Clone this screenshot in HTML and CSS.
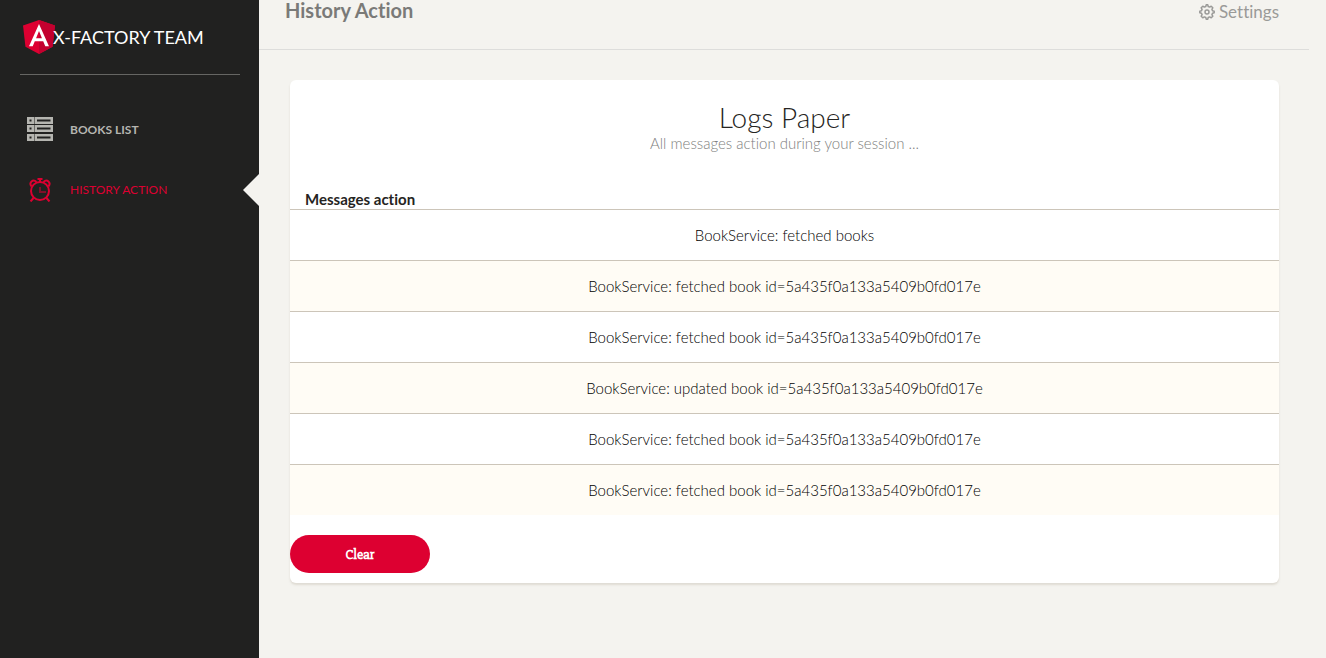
FILE: index.html
```html
<!DOCTYPE html>
<html lang="en">
<head>
<meta charset="utf-8">
<title>History Action</title>
<link rel="stylesheet" href="styles.css">
</head>
<body>
<div class="app">
  <aside class="sidebar">
    <a class="brand" href="#">
      <svg class="brand-logo" viewBox="0 0 250 266" aria-hidden="true">
        <path fill="#dd0031" d="M125 0 0 44l19 166 106 56 106-56 19-166z"/>
        <path fill="#c3002f" d="M125 0v266l106-56 19-166z"/>
        <path fill="#fff" d="M125 31 47 206h29l16-40h66l16 40h29zm23 111h-46l23-56z"/>
      </svg>
      <span>X-FACTORY TEAM</span>
    </a>
    <nav class="menu">
      <a class="menu-item" href="#">
        <svg class="menu-icon list-icon" viewBox="0 0 26 24" aria-hidden="true">
          <path fill="currentColor" fill-rule="evenodd" d="M0 0h7v7H0zM2.500 2.500v2h2v-2zM7.500 0H26v7H7.500zM10 2.500v2h13.500v-2zM0 8h7v7H0zM2.500 10.500v2h2v-2zM7.500 8H26v7H7.500zM10 10.500v2h13.500v-2zM0 17h7v7H0zM2.500 19.500v2h2v-2zM7.500 17H26v7H7.500zM10 19.500v2h13.500v-2z"/>
        </svg>
        <span class="strong">BOOKS LIST</span>
      </a>
      <a class="menu-item active" href="#" aria-current="page">
        <svg class="menu-icon" viewBox="0 0 26 24" aria-hidden="true">
          <g fill="none" stroke="currentColor" stroke-width="2">
            <circle cx="13" cy="13" r="9"/>
            <path d="M10.500 1h5M13 1v3M6.500 20l-3 3.500M19.500 20l3 3.500M4.500 8.500C1.500 4.500 6 .5 9.500 4M21.500 8.500c3-4-1.500-8-5-4.500"/>
            <path d="M13 9v5h6" opacity=".5"/>
          </g>
        </svg>
        <span>HISTORY ACTION</span>
      </a>
    </nav>
  </aside>
  <div class="main">
    <header class="topbar">
      <h1>History Action</h1>
      <a class="settings" href="#">
        <svg class="gear" viewBox="0 0 16 16" aria-hidden="true">
          <g fill="none" stroke="currentColor" stroke-width="1.500">
            <path stroke-linejoin="round" d="M6.800 2.500 7.200.8h1.600l.4 1.700 1.500.6 1.500-.9 1.600 1.600-.9 1.500.6 1.500 1.700.4v1.600l-1.700.4-.6 1.500.9 1.500-1.600 1.600-1.500-.9-1.500.6-.4 1.700H7.200l-.4-1.700-1.500-.6-1.500.9-1.600-1.600.9-1.500-.6-1.500L.8 8.800V7.200l1.700-.4.6-1.500-.9-1.500 1.600-1.600 1.500.9z"/>
            <circle cx="8" cy="8" r="2"/>
          </g>
        </svg>
        <span>Settings</span>
      </a>
    </header>
    <main class="content">
      <section class="card">
        <h2>Logs Paper</h2>
        <p class="subtitle">All messages action during your session ...</p>
        <table>
          <thead><tr><th scope="col">Messages action</th></tr></thead>
          <tbody>
            <tr><td>BookService: fetched books</td></tr>
            <tr><td>BookService: fetched book id=5a435f0a133a5409b0fd017e</td></tr>
            <tr><td>BookService: fetched book id=5a435f0a133a5409b0fd017e</td></tr>
            <tr><td>BookService: updated book id=5a435f0a133a5409b0fd017e</td></tr>
            <tr><td>BookService: fetched book id=5a435f0a133a5409b0fd017e</td></tr>
            <tr><td>BookService: fetched book id=5a435f0a133a5409b0fd017e</td></tr>
          </tbody>
        </table>
        <button class="clear" type="button">Clear</button>
      </section>
    </main>
  </div>
</div>
</body>
</html>
```
FILE: styles.css
```css
* { box-sizing: border-box; }
body {
  margin: 0;
  background: #f4f3ef;
  color: #252422;
  font-family: Muli, Lato, sans-serif;
  font-size: 15px;
  line-height: 20px;
  font-variant-ligatures: none;
}
a { color: inherit; text-decoration: none; }
h1, h2, p { margin: 0; }
.app { display: flex; min-height: 100vh; }
.sidebar {
  flex: 0 0 259px;
  padding: 0 19px 0 20px;
  background: #212120;
}
.brand {
  display: flex;
  align-items: center;
  height: 75px;
  padding-left: 3px;
  border-bottom: 1px solid #666663;
  color: #fff;
  font-size: 18px;
}
.brand-logo { width: 32px; height: 34px; margin-right: -2px; }
.menu { padding-top: 25px; }
.menu-item {
  position: relative;
  display: flex;
  align-items: center;
  gap: 17px;
  height: 60px;
  padding-left: 7px;
  color: #b5b5b0;
  font-size: 12px;
}
.menu-icon { width: 26px; height: 24px; }
.list-icon { margin-bottom: 2px; }
.strong { font-weight: 700; }
.active { color: #dd0031; }
.active::after {
  content: "";
  position: absolute;
  top: 14px;
  right: -19px;
  border: solid transparent;
  border-width: 16px 16px 16px 0;
  border-right-color: #f4f3ef;
}
.main { flex: 1; min-width: 0; }
.topbar {
  display: flex;
  justify-content: space-between;
  height: 50px;
  margin-right: 17px;
  padding: 0 30px 0 26px;
  border-bottom: 1px solid #dddddb;
}
h1 { color: #7a7a78; font-size: 20px; font-weight: 700; }
.settings {
  display: flex;
  align-items: center;
  gap: 4px;
  height: 24px;
  color: #9a9a98;
  font-size: 17px;
}
.gear { width: 16px; height: 16px; }
.content { padding: 30px 47px 30px 31px; }
.card {
  padding: 22px 0 10px;
  border-radius: 6px;
  background: #fff;
  box-shadow: 0 2px 2px rgba(204, 197, 185, .5);
}
h2 { font-size: 28px; font-weight: 300; line-height: 31px; text-align: center; }
.subtitle { color: #80807e; text-align: center; font-weight: 300; }
table { width: 100%; margin-top: 36px; border-collapse: separate; border-spacing: 0; }
th { padding: 0 15px; text-align: left; font-weight: 700; }
td {
  height: 51px;
  padding: 0 15px;
  border-top: 1px solid #ccc5b9;
  color: #000;
  font-weight: 300;
  text-align: center;
}
tbody tr:nth-child(even) { background: #fffcf5; }
.clear {
  display: block;
  width: 140px;
  height: 38px;
  margin-top: 20px;
  border: 0;
  border-radius: 20px;
  background: #dd0031;
  color: #fff;
  font-family: "Slabo 27px", "Liberation Serif", serif;
  font-size: 14px;
  font-weight: 700;
}
```
